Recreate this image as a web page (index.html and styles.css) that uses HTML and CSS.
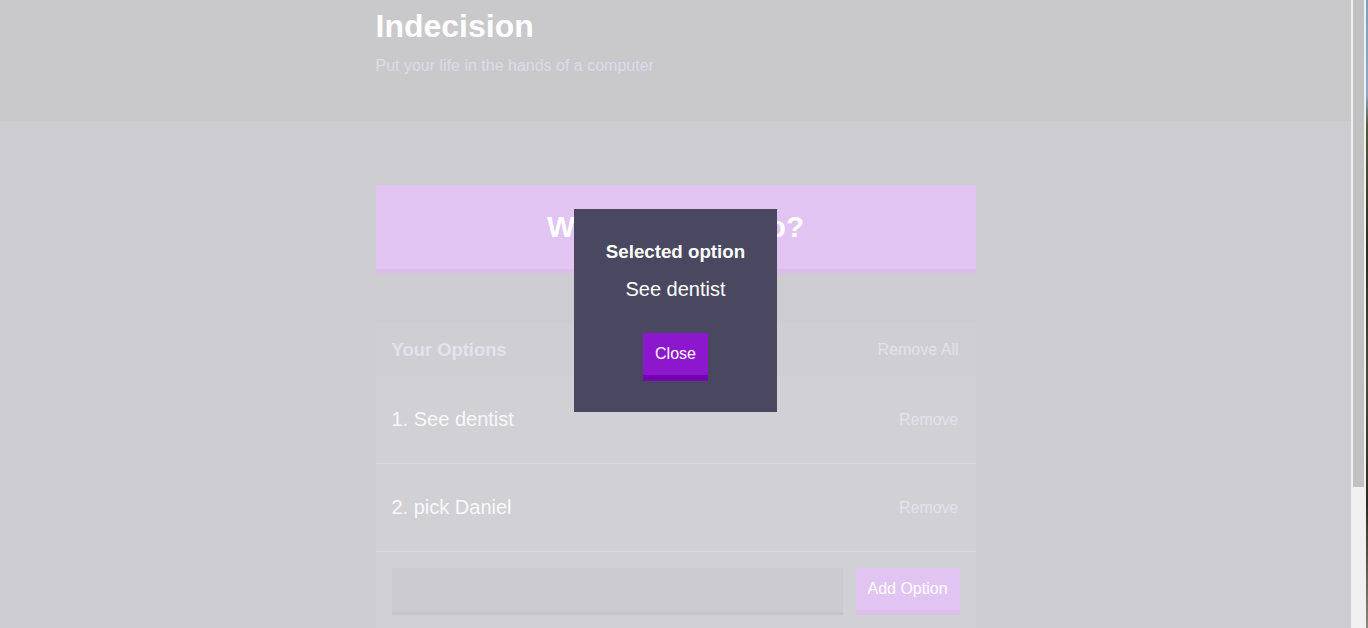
FILE: index.html
```html
<!DOCTYPE html>
<html lang="en">
<head>
<meta charset="utf-8">
<title>Indecision</title>
<link rel="stylesheet" href="styles.css">
</head>
<body>
<div class="app">
  <header class="header">
    <div class="container">
      <h1 class="header-title">Indecision</h1>
      <p class="header-subtitle">Put your life in the hands of a computer</p>
    </div>
  </header>
  <main class="container main">
    <button class="big-button">What should I do?</button>
    <section class="widget">
      <div class="widget-header">
        <h3 class="widget-title">Your Options</h3>
        <button class="link-button">Remove All</button>
      </div>
      <div class="option">
        <p class="option-text">1. See dentist</p>
        <button class="link-button">Remove</button>
      </div>
      <div class="option">
        <p class="option-text">2. pick Daniel</p>
        <button class="link-button">Remove</button>
      </div>
      <form class="add-option">
        <input class="add-option-input" type="text" name="option">
        <button class="add-button" type="button">Add Option</button>
      </form>
    </section>
  </main>
  <div class="overlay">
    <div class="modal">
      <h3 class="modal-title">Selected option</h3>
      <p class="modal-body">See dentist</p>
      <button class="modal-button">Close</button>
    </div>
  </div>
</div>
<div class="scrollbar"><div class="scrollbar-thumb"></div></div>
<div class="desktop-edge"></div>
</body>
</html>
```

FILE: styles.css
```css
html, body {
  margin: 0;
  padding: 0;
  height: 628px;
  overflow: hidden;
}

body {
  display: flex;
  font-family: "Liberation Sans", Arial, sans-serif;
}

.app {
  flex: 1;
  position: relative;
  background: #cdcdd1;
}

.container {
  width: 600px;
  margin: 0 auto;
}

.header {
  background: #c9c9cb;
  height: 121px;
  box-sizing: border-box;
  padding-top: 8px;
}

.header-title {
  margin: 0;
  font-size: 32px;
  line-height: 36px;
  font-weight: bold;
  color: #ffffff;
}

.header-subtitle {
  margin: 13px 0 0;
  font-size: 16px;
  line-height: 18px;
  color: #dcdcea;
}

.main {
  padding-top: 64px;
}

.big-button {
  display: block;
  width: 100%;
  height: 89px;
  margin: 0;
  padding: 0;
  border: 0;
  border-bottom: 5px solid #dcbee9;
  background: #e2c4f2;
  color: #ffffff;
  font-family: inherit;
  font-size: 29.7px;
  font-weight: bold;
  text-align: center;
}

.widget {
  margin-top: 49px;
  background: #d1d0d5;
}

.widget-header {
  height: 53px;
  display: flex;
  align-items: center;
  justify-content: space-between;
  padding: 0 17px 0 16px;
  background: #cfced3;
}

.widget-title {
  margin: 0;
  font-size: 18.4px;
  font-weight: bold;
  color: #e3e2ee;
}

.link-button {
  background: none;
  border: 0;
  padding: 0;
  font-family: inherit;
  font-size: 16px;
  color: #e3e2ec;
}

.option {
  height: 87px;
  display: flex;
  align-items: center;
  justify-content: space-between;
  padding: 0 17px 0 16px;
  border-bottom: 1px solid #d9d8dd;
}

.option-text {
  margin: 0;
  font-size: 20px;
  color: #f8f8fa;
}

.add-option {
  display: flex;
  gap: 13px;
  padding: 16px;
  margin: 0;
}

.add-option-input {
  flex: 1;
  height: 47px;
  box-sizing: border-box;
  margin: 0;
  border: 0;
  border-bottom: 3px solid #c6c5ca;
  background: #cccbd0;
}

.add-button {
  width: 104px;
  height: 47px;
  margin: 0;
  padding: 0;
  border: 0;
  border-bottom: 5px solid #dcbee9;
  background: #e2c4f2;
  color: #ffffff;
  font-family: inherit;
  font-size: 16px;
}

.overlay {
  position: absolute;
  inset: 0;
}

.modal {
  position: absolute;
  top: 209px;
  left: 574px;
  width: 203px;
  box-sizing: border-box;
  padding: 32px 0 31px;
  background: #4a4860;
  text-align: center;
  color: #ffffff;
}

.modal-title {
  margin: 0;
  font-size: 18.72px;
  line-height: 22px;
  font-weight: bold;
}

.modal-body {
  margin: 15px 0 0;
  font-size: 20px;
  line-height: 23px;
}

.modal-button {
  margin-top: 32px;
  height: 48px;
  padding: 0 12px;
  border: 0;
  border-bottom: 6px solid #7500b3;
  background: #8d17cc;
  color: #ffffff;
  font-family: inherit;
  font-size: 16px;
  vertical-align: top;
}

.scrollbar {
  width: 15px;
  background: #f0f0f0;
  padding: 0 2px;
  box-sizing: border-box;
}

.scrollbar-thumb {
  height: 487px;
  background: #c1c1c1;
}

.desktop-edge {
  width: 2px;
  background: linear-gradient(#7d9cc6 0%, #8aa6c9 15%, #4f5a3e 20%, #2d2c22 40%, #4a4a3c 60%, #2c2a22 80%, #8c877a 100%);
}
```
